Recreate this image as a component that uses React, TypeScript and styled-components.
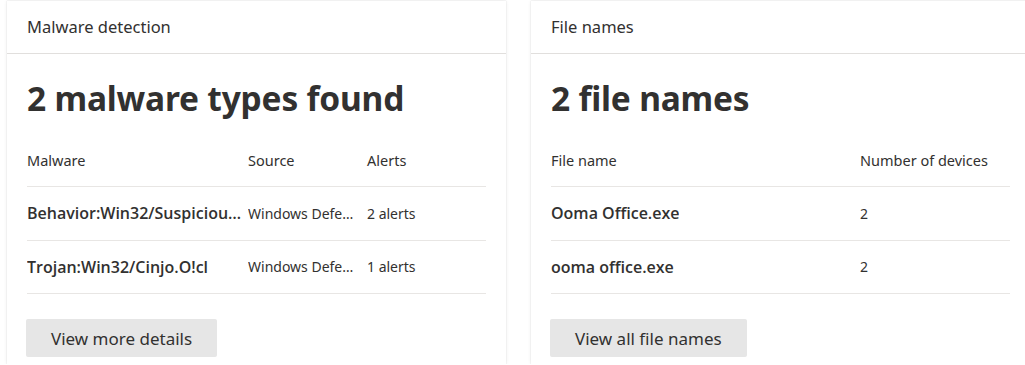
import React from "react";
import styled, { createGlobalStyle } from "styled-components";

const Global = createGlobalStyle`
  html, body { margin: 0; padding: 0; background: #ffffff; overflow: hidden; }
  body { font-family: "Segoe UI", "Noto Sans", sans-serif; color: #323130; }
`;

const Page = styled.div`
  display: flex;
  gap: 25px;
  padding: 1px 0 0 7px;
  width: 1100px;
  height: 364px;
  box-sizing: border-box;
`;

const Card = styled.section`
  flex: 0 0 499px;
  background: #fff;
  box-shadow: 0 0 1px rgba(0, 0, 0, 0.18), 0 0 4px rgba(0, 0, 0, 0.07);
  display: flex;
  flex-direction: column;
`;

const Header = styled.header`
  height: 53px;
  box-sizing: border-box;
  padding: 0 20px 1px;
  display: flex;
  align-items: center;
  border-bottom: 1px solid #e1dfdd;
  font-size: 16.5px;
  color: #323130;
`;

const Body = styled.div`
  padding: 0 20px;
  display: flex;
  flex-direction: column;
`;

const Title = styled.h2`
  margin: 24px 0 0;
  font-size: 33.5px;
  font-weight: 700;
  line-height: 40px;
  letter-spacing: -0.2px;
`;

const Table = styled.div<{ $cols: string }>`
  margin-top: 22px;
  display: grid;
  grid-template-columns: ${(p) => p.$cols};
`;

const HeadCell = styled.div`
  height: 47px;
  display: flex;
  align-items: center;
  font-size: 14.5px;
  border-bottom: 1px solid #e8e6e4;
  padding-bottom: 7px;
  box-sizing: border-box;
`;

const Cell = styled.div<{ $strong?: boolean }>`
  height: 53.5px;
  display: flex;
  align-items: center;
  border-bottom: 1px solid #e8e6e4;
  box-sizing: border-box;
  font-family: ${(p) => (p.$strong ? `"Open Sans", "Noto Sans", sans-serif` : "inherit")};
  font-size: ${(p) => (p.$strong ? "16px" : "14px")};
  font-weight: ${(p) => (p.$strong ? 600 : 400)};
  min-width: 0;
  padding-right: 6px;
`;

const Ellipsis = styled.span`
  white-space: nowrap;
  overflow: hidden;
  text-overflow: ellipsis;
`;

const Button = styled.button`
  margin-top: 25px;
  align-self: flex-start;
  height: 38px;
  padding: 0 25px;
  border: none;
  border-radius: 2px;
  background: #e6e6e6;
  font-family: inherit;
  font-size: 17px;
  color: #323130;
  cursor: pointer;
  margin-left: -1px;
`;

const malware = [
  { name: "Behavior:Win32/SuspiciousActivity", source: "Windows Defender", alerts: "2 alerts" },
  { name: "Trojan:Win32/Cinjo.O!cl", source: "Windows Defender", alerts: "1 alerts" },
];

const files = [
  { name: "Ooma Office.exe", count: "2" },
  { name: "ooma office.exe", count: "2" },
];

export default function App() {
  return (
    <>
      <Global />
      <Page>
        <Card>
          <Header>Malware detection</Header>
          <Body>
            <Title>2 malware types found</Title>
            <Table $cols="221px 119px 119px">
              <HeadCell>Malware</HeadCell>
              <HeadCell>Source</HeadCell>
              <HeadCell>Alerts</HeadCell>
              {malware.map((m) => (
                <React.Fragment key={m.name}>
                  <Cell $strong><Ellipsis>{m.name}</Ellipsis></Cell>
                  <Cell><Ellipsis>{m.source}</Ellipsis></Cell>
                  <Cell><Ellipsis>{m.alerts}</Ellipsis></Cell>
                </React.Fragment>
              ))}
            </Table>
            <Button>View more details</Button>
          </Body>
        </Card>
        <Card>
          <Header>File names</Header>
          <Body>
            <Title>2 file names</Title>
            <Table $cols="309px 150px">
              <HeadCell>File name</HeadCell>
              <HeadCell>Number of devices</HeadCell>
              {files.map((f) => (
                <React.Fragment key={f.name}>
                  <Cell $strong><Ellipsis>{f.name}</Ellipsis></Cell>
                  <Cell><Ellipsis>{f.count}</Ellipsis></Cell>
                </React.Fragment>
              ))}
            </Table>
            <Button>View all file names</Button>
          </Body>
        </Card>
      </Page>
    </>
  );
}
